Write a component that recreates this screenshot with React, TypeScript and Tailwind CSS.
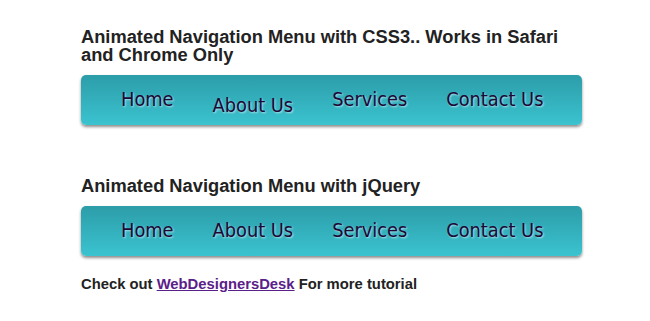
import React from 'react';

const items = ['Home', 'About Us', 'Services', 'Contact Us'];

const NavBar: React.FC<{ dropIndex?: number }> = ({ dropIndex }) => (
  <ul className="flex items-center h-[50px] w-[501px] pl-[20.5px] rounded-[5px] bg-gradient-to-b from-[#2c9da9] to-[#3bc3d0] shadow-[0_2px_3px_rgba(0,0,0,0.45)]">
    {items.map((item, i) => (
      <li
        key={item}
        className={`px-[19.5px] text-[19.8px] leading-6 text-[#1e0836] [font-family:'DejaVu_Sans_Condensed','DejaVu_Sans',sans-serif] [font-stretch:condensed] [text-shadow:1px_1px_2px_rgba(255,255,255,0.6)] ${
          i === dropIndex ? 'mt-[12px]' : ''
        }`}
      >
        {item}
      </li>
    ))}
  </ul>
);

export default function App() {
  return (
    <div className="w-[650px] h-[321px] bg-white pl-[81px] pt-[28px] text-[#222] [font-family:'Liberation_Sans',Arial,sans-serif]">
      <h2 className="w-[501px] text-[18.3px] leading-[18px] font-bold">
        Animated Navigation Menu with CSS3.. Works in Safari and Chrome Only
      </h2>
      <div className="mt-[11px]">
        <NavBar dropIndex={1} />
      </div>
      <h2 className="mt-[52px] text-[18.3px] leading-[18px] font-bold">
        Animated Navigation Menu with jQuery
      </h2>
      <div className="mt-[11px]">
        <NavBar />
      </div>
      <p className="mt-[20px] text-[14.8px] leading-4 font-bold">
        Check out{' '}
        <a href="#" className="text-[#5a2089] underline">
          WebDesignersDesk
        </a>{' '}
        For more tutorial
      </p>
    </div>
  );
}
